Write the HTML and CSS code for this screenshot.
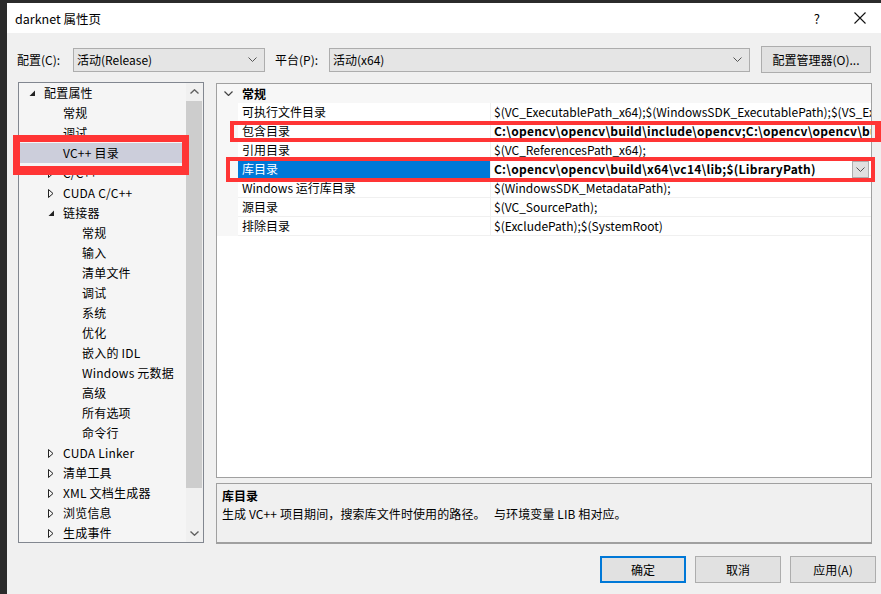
FILE: index.html
```html
<!DOCTYPE html>
<html lang="zh-CN">
<head>
  <meta charset="UTF-8" />
  <title>darknet 属性页</title>
  <link rel="stylesheet" href="styles.css">
</head>
<body>

  <div class="window">
    <div class="titlebar">
      <span class="title">darknet 属性页</span>
      <span class="help">?</span>
      <svg class="close" width="12" height="12" viewBox="0 0 12 12"><path d="M0.5 0.5 L11.5 11.5 M11.5 0.5 L0.5 11.5" stroke="#111" stroke-width="1.1" fill="none"/></svg>
    </div>

    <div class="content">
      <div class="config-row">
        <label class="config-label">配置(C):</label>
        <div class="combo combo-config">
          <span>活动(Release)</span>
          <svg width="9" height="5" viewBox="0 0 9 5"><path d="M0.5 0.5 L4.5 4.5 L8.5 0.5" stroke="#555" fill="none"/></svg>
        </div>
        <label class="platform-label">平台(P):</label>
        <div class="combo combo-platform">
          <span>活动(x64)</span>
          <svg width="9" height="5" viewBox="0 0 9 5"><path d="M0.5 0.5 L4.5 4.5 L8.5 0.5" stroke="#555" fill="none"/></svg>
        </div>
        <button class="btn btn-manager">配置管理器(O)...</button>
      </div>

      <div class="main">
        <div class="tree">
          <div class="tree-list">
            <div class="tree-item lvl0"><span class="arrow"><svg width="7" height="7" viewBox="0 0 7 7"><polygon points="6,0.5 6,6 0.5,6" fill="#222"/></svg></span>配置属性</div>
            <div class="tree-item lvl1"><span class="arrow"></span>常规</div>
            <div class="tree-item lvl1"><span class="arrow"></span>调试</div>
            <div class="tree-item lvl1 selected"><span class="arrow"></span>VC++ 目录</div>
            <div class="tree-item lvl1"><span class="arrow"><svg width="6" height="9" viewBox="0 0 6 9"><polygon points="0.5,0.5 5,4.5 0.5,8.5" fill="none" stroke="#222"/></svg></span>C/C++</div>
            <div class="tree-item lvl1"><span class="arrow"><svg width="6" height="9" viewBox="0 0 6 9"><polygon points="0.5,0.5 5,4.5 0.5,8.5" fill="none" stroke="#222"/></svg></span>CUDA C/C++</div>
            <div class="tree-item lvl1"><span class="arrow"><svg width="7" height="7" viewBox="0 0 7 7"><polygon points="6,0.5 6,6 0.5,6" fill="#222"/></svg></span>链接器</div>
            <div class="tree-item lvl2"><span class="arrow"></span>常规</div>
            <div class="tree-item lvl2"><span class="arrow"></span>输入</div>
            <div class="tree-item lvl2"><span class="arrow"></span>清单文件</div>
            <div class="tree-item lvl2"><span class="arrow"></span>调试</div>
            <div class="tree-item lvl2"><span class="arrow"></span>系统</div>
            <div class="tree-item lvl2"><span class="arrow"></span>优化</div>
            <div class="tree-item lvl2"><span class="arrow"></span>嵌入的 IDL</div>
            <div class="tree-item lvl2"><span class="arrow"></span>Windows 元数据</div>
            <div class="tree-item lvl2"><span class="arrow"></span>高级</div>
            <div class="tree-item lvl2"><span class="arrow"></span>所有选项</div>
            <div class="tree-item lvl2"><span class="arrow"></span>命令行</div>
            <div class="tree-item lvl1"><span class="arrow"><svg width="6" height="9" viewBox="0 0 6 9"><polygon points="0.5,0.5 5,4.5 0.5,8.5" fill="none" stroke="#222"/></svg></span>CUDA Linker</div>
            <div class="tree-item lvl1"><span class="arrow"><svg width="6" height="9" viewBox="0 0 6 9"><polygon points="0.5,0.5 5,4.5 0.5,8.5" fill="none" stroke="#222"/></svg></span>清单工具</div>
            <div class="tree-item lvl1"><span class="arrow"><svg width="6" height="9" viewBox="0 0 6 9"><polygon points="0.5,0.5 5,4.5 0.5,8.5" fill="none" stroke="#222"/></svg></span>XML 文档生成器</div>
            <div class="tree-item lvl1"><span class="arrow"><svg width="6" height="9" viewBox="0 0 6 9"><polygon points="0.5,0.5 5,4.5 0.5,8.5" fill="none" stroke="#222"/></svg></span>浏览信息</div>
            <div class="tree-item lvl1"><span class="arrow"><svg width="6" height="9" viewBox="0 0 6 9"><polygon points="0.5,0.5 5,4.5 0.5,8.5" fill="none" stroke="#222"/></svg></span>生成事件</div>
          </div>
          <div class="scrollbar">
            <div class="scroll-btn"><svg width="9" height="5" viewBox="0 0 9 5"><path d="M0.5 4.5 L4.5 0.8 L8.5 4.5" stroke="#606060" stroke-width="1.4" fill="none"/></svg></div>
            <div class="scroll-track"><div class="scroll-thumb"></div></div>
            <div class="scroll-btn"><svg width="9" height="5" viewBox="0 0 9 5"><path d="M0.5 0.5 L4.5 4.2 L8.5 0.5" stroke="#606060" stroke-width="1.4" fill="none"/></svg></div>
          </div>
        </div>

        <div class="right-col">
          <div class="grid">
            <div class="grid-category">
              <span class="cat-arrow"><svg width="9" height="5" viewBox="0 0 9 5"><path d="M0.5 0.5 L4.5 4.5 L8.5 0.5" stroke="#444" stroke-width="1.2" fill="none"/></svg></span>
              <span class="cat-name">常规</span>
            </div>
            <div class="grid-row">
              <div class="gutter"></div>
              <div class="name">可执行文件目录</div>
              <div class="value">$(VC_ExecutablePath_x64);$(WindowsSDK_ExecutablePath);$(VS_ExecutablePath);$(MSBuild_ExecutablePath);$(SystemRoot)</div>
            </div>
            <div class="grid-row">
              <div class="gutter"></div>
              <div class="name">包含目录</div>
              <div class="value bold">C:\opencv\opencv\build\include\opencv;C:\opencv\opencv\build\include;$(IncludePath)</div>
            </div>
            <div class="grid-row">
              <div class="gutter"></div>
              <div class="name">引用目录</div>
              <div class="value">$(VC_ReferencesPath_x64);</div>
            </div>
            <div class="grid-row active">
              <div class="gutter"></div>
              <div class="name">库目录</div>
              <div class="value bold">
                <span class="value-text">C:\opencv\opencv\build\x64\vc14\lib;$(LibraryPath)</span>
                <span class="drop-btn"><svg width="9" height="5" viewBox="0 0 9 5"><path d="M0.5 0.5 L4.5 4.5 L8.5 0.5" stroke="#555" fill="none"/></svg></span>
              </div>
            </div>
            <div class="grid-row">
              <div class="gutter"></div>
              <div class="name">Windows 运行库目录</div>
              <div class="value">$(WindowsSDK_MetadataPath);</div>
            </div>
            <div class="grid-row">
              <div class="gutter"></div>
              <div class="name">源目录</div>
              <div class="value">$(VC_SourcePath);</div>
            </div>
            <div class="grid-row">
              <div class="gutter"></div>
              <div class="name">排除目录</div>
              <div class="value">$(ExcludePath);$(SystemRoot)</div>
            </div>
          </div>

          <div class="desc">
            <div class="desc-title">库目录</div>
            <div class="desc-text">生成 VC++ 项目期间，搜索库文件时使用的路径。&nbsp;&nbsp; 与环境变量 LIB 相对应。</div>
          </div>
        </div>
      </div>

      <div class="buttons">
        <button class="btn btn-default">确定</button>
        <button class="btn">取消</button>
        <button class="btn">应用(A)</button>
      </div>
    </div>

    <!-- red annotation frames drawn over the dialog -->
    <div class="mark mark-tree"></div>
    <div class="mark mark-include"></div>
    <div class="mark mark-lib"></div>
  </div>

</body>
</html>
```

FILE: styles.css
```css
body {
  margin: 0;
  background-color: #2b2b2b;
  font-family: "Noto Sans CJK SC", "Noto Sans", sans-serif;
  font-size: 12px;
  color: #000;
  overflow: hidden;
}
.window {
  position: relative;
  margin: 3px 0 0 7px;
  width: 874px;
  height: 591px;
  background-color: #f0f0f0;
}
.titlebar {
  height: 30px;
  background-color: #fff;
  display: flex;
  align-items: center;
  padding-left: 8px;
}
.title {
  font-size: 12.5px;
  flex: 1;
}
.help {
  font-size: 13px;
  margin-right: 34px;
}
.close {
  margin-right: 15px;
}
.content {
  padding: 13px 9px 0 11px;
}
.config-row {
  display: flex;
  align-items: center;
  height: 27px;
  margin-left: -1px;
}
.config-label {
  width: 56px;
}
.platform-label {
  width: 54px;
  margin-left: 10px;
}
.combo {
  box-sizing: border-box;
  height: 24px;
  background-color: #e5e5e5;
  border: 1px solid #adadad;
  display: flex;
  align-items: center;
  justify-content: space-between;
  padding: 0 7px 0 3px;
}
.combo-config {
  width: 192px;
}
.combo-platform {
  width: 421px;
}
.btn {
  box-sizing: border-box;
  height: 27px;
  background-color: #e1e1e1;
  border: 1px solid #adadad;
  font-family: inherit;
  font-size: 12px;
  color: #000;
  padding: 0;
}
.btn-manager {
  width: 110px;
  margin-left: 11px;
}
.main {
  display: flex;
  margin-top: 9px;
  height: 462px;
}
.tree {
  box-sizing: border-box;
  width: 186px;
  height: 461px;
  border: 1px solid #828790;
  background-color: #f5f5f5;
  display: flex;
}
.tree-list {
  flex: 1;
  padding: 0 3px 0 1px;
  overflow: hidden;
}
.tree-item {
  height: 20px;
  line-height: 20px;
  display: flex;
  align-items: center;
  white-space: nowrap;
  letter-spacing: 0.2px;
}
.tree-item .arrow {
  width: 19px;
  height: 20px;
  display: flex;
  align-items: center;
  padding-left: 4px;
  box-sizing: border-box;
}
.lvl0 { padding-left: 5px; }
.lvl1 { padding-left: 24px; }
.lvl2 { padding-left: 43px; }
.tree-item.selected {
  background-color: #cccedb;
}
.scrollbar {
  width: 17px;
  display: flex;
  flex-direction: column;
  background-color: #f0f0f0;
}
.scroll-btn {
  height: 17px;
  display: flex;
  align-items: center;
  justify-content: center;
}
.scroll-track {
  flex: 1;
  padding-top: 1px;
}
.scroll-thumb {
  height: 387px;
  background-color: #cdcdcd;
  margin: 0 1px 0 0;
}
.right-col {
  margin-left: 12px;
  width: 656px;
  display: flex;
  flex-direction: column;
}
.grid {
  box-sizing: border-box;
  height: 395px;
  margin-top: 1px;
  border: 1px solid #a0a0a0;
  background-color: #fff;
}
.grid-category {
  height: 19px;
  display: flex;
  align-items: center;
  background-color: #f7f7f7;
  font-weight: bold;
}
.cat-arrow {
  width: 21px;
  display: flex;
  justify-content: center;
  padding-left: 2px;
  box-sizing: border-box;
}
.cat-name {
  padding-left: 4px;
}
.grid-row {
  display: flex;
  height: 19px;
  line-height: 18px;
  white-space: nowrap;
}
.gutter {
  width: 21px;
  background-color: #f7f7f7;
}
.grid-row .name {
  width: 253px;
  padding-left: 4px;
  box-sizing: border-box;
  border-bottom: 1px solid #f0f0f0;
  border-right: 1px solid #f0f0f0;
}
.grid-row .value {
  flex: 1;
  min-width: 0;
  overflow: hidden;
  padding-left: 3px;
  border-bottom: 1px solid #f0f0f0;
}
.grid-row .value.bold {
  font-weight: bold;
  letter-spacing: 0.25px;
}
.grid-row.active .name {
  background-color: #0078d7;
  color: #fff;
}
.grid-row.active .value {
  display: flex;
  align-items: center;
}
.value-text {
  flex: 1;
  overflow: hidden;
}
.drop-btn {
  box-sizing: border-box;
  width: 17px;
  height: 17px;
  margin-right: 2px;
  background-color: #e1e1e1;
  border: 1px solid #adadad;
  display: flex;
  align-items: center;
  justify-content: center;
}
.desc {
  box-sizing: border-box;
  margin-top: 5px;
  height: 61px;
  border: 1px solid #a0a0a0;
  border-bottom-width: 2px;
  padding: 3px 5px 0;
  line-height: 18px;
}
.desc-title {
  font-weight: bold;
}
.desc-text {
  letter-spacing: 0.1px;
}
.buttons {
  display: flex;
  justify-content: flex-end;
  gap: 9px;
  margin-top: 12px;
  margin-right: -4px;
}
.buttons .btn {
  width: 86px;
}
.btn-default {
  border: 2px solid #0078d7;
}
.mark {
  position: absolute;
  box-sizing: border-box;
  border: 4px solid #ff3535;
}
.mark-tree {
  left: 6px;
  top: 132px;
  width: 176px;
  height: 40px;
  border-width: 7px 7px 9px 7px;
}
.mark-include {
  left: 223px;
  top: 118px;
  width: 651px;
  height: 21px;
  border-right-width: 6px;
}
.mark-lib {
  left: 219px;
  top: 154px;
  width: 649px;
  height: 25px;
}
```
